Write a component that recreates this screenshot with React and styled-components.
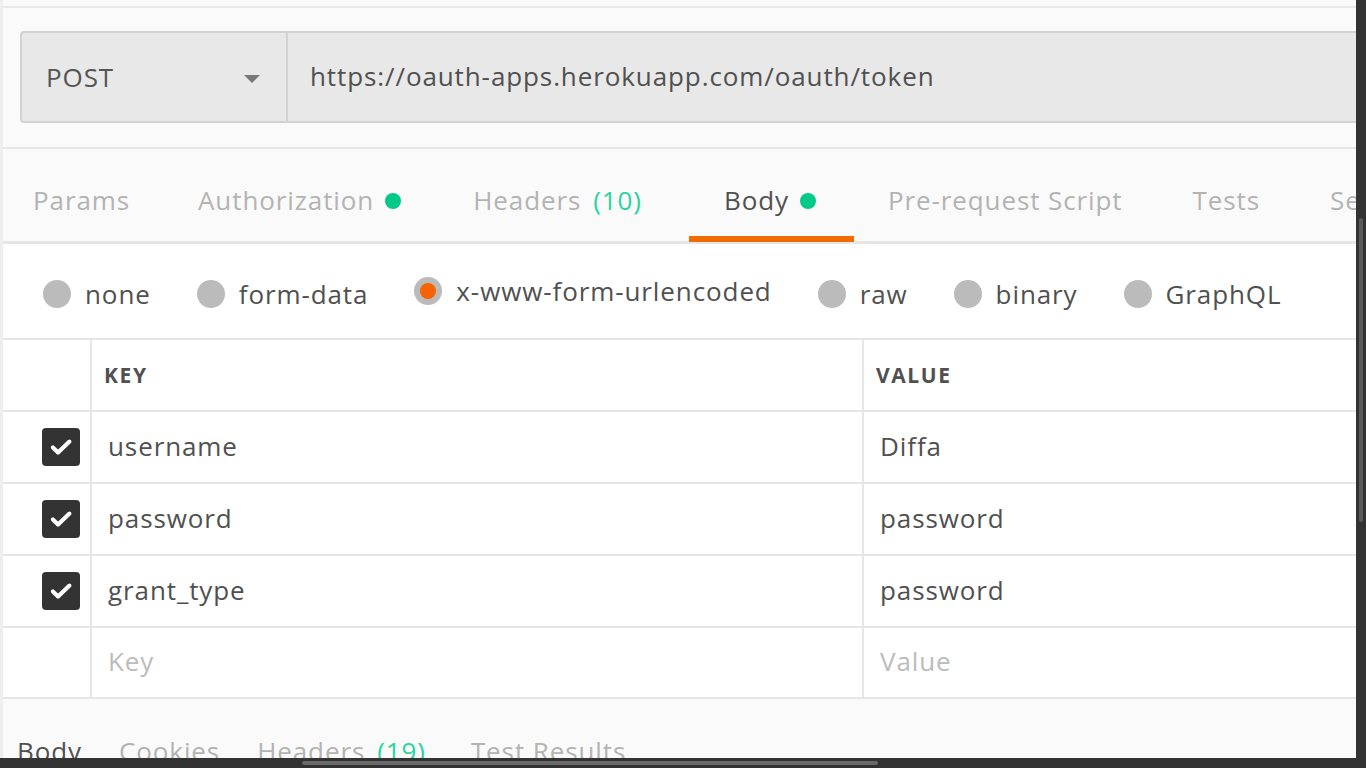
import React from 'react';
import styled, { createGlobalStyle } from 'styled-components';

const GlobalStyle = createGlobalStyle`
  html, body {
    margin: 0;
    padding: 0;
    background: #fafafa;
    overflow: hidden;
  }
  * { box-sizing: border-box; }
`;

const Frame = styled.div`
  width: 1366px;
  height: 768px;
  display: grid;
  grid-template-columns: 1356px 10px;
  grid-template-rows: 758px 10px;
  background: #333;
  font-family: "Open Sans", "Liberation Sans", sans-serif;
  letter-spacing: 0.9px;
  color: #505050;
`;

const Main = styled.div`
  display: flex;
  flex-direction: column;
  background: #fafafa;
  overflow: hidden;
  border-left: 3px solid #eeeeee;
`;

const TopStrip = styled.div`
  height: 8px;
  flex: none;
  border-bottom: 2px solid #e8e8e8;
  background: #f9f9f9;
`;

const RequestArea = styled.div`
  flex: none;
  padding: 23px 0 24px 17px;
  border-bottom: 2px solid #e6e6e6;
`;

const RequestBar = styled.div`
  display: flex;
  height: 92px;
  background: #e8e8e8;
  border: 2px solid #d2d2d2;
  border-right: none;
  border-radius: 4px 0 0 4px;
`;

const Method = styled.div`
  width: 266px;
  display: flex;
  align-items: center;
  justify-content: space-between;
  padding: 0 26px 0 24px;
  border-right: 2px solid #d2d2d2;
  font-size: 26px;
  font-weight: 500;
  color: #555;
`;

const Caret = styled.span`
  width: 0;
  height: 0;
  border-left: 8px solid transparent;
  border-right: 8px solid transparent;
  border-top: 8px solid #777;
  margin-top: 3px;
`;

const Url = styled.div`
  display: flex;
  align-items: center;
  padding-left: 22px;
  padding-bottom: 2px;
  font-size: 26px;
  color: #505050;
`;

const TabRow = styled.div`
  flex: none;
  height: 95px;
  display: flex;
  align-items: stretch;
  border-bottom: 3px solid #e6e6e6;
  white-space: nowrap;
  padding-left: 30px;
`;

const Tab = styled.div`
  position: relative;
  display: flex;
  align-items: center;
  padding: 10px ${p => p.$pr || 0}px 0 ${p => p.$pl || 0}px;
  margin-right: ${p => p.$gap}px;
  font-size: 26px;
  color: ${p => (p.$active ? '#505050' : '#b3b3b3')};
  ${p =>
    p.$active &&
    `&::after {
      content: '';
      position: absolute;
      left: 0;
      right: 0;
      bottom: -1px;
      height: 6px;
      background: #f26b00;
    }`}
`;

const Count = styled.span`
  color: #2ad4a0;
  margin-left: ${p => p.$ml ?? 12}px;
`;

const Dot = styled.span`
  width: 16px;
  height: 16px;
  border-radius: 50%;
  background: #00c98a;
  margin-left: 11px;
  margin-top: 2px;
`;

const RadioRow = styled.div`
  flex: none;
  height: 96px;
  background: #fff;
  display: flex;
  align-items: center;
  padding: 5px 0 0 40px;
  border-bottom: 2px solid #e6e6e6;
  white-space: nowrap;
`;

const RadioItem = styled.label`
  display: flex;
  align-items: center;
  margin-right: ${p => p.$gap}px;
  font-size: 26px;
  color: #505050;
  margin-top: ${p => (p.$checked ? -5 : 0)}px;
`;

const RadioCircle = styled.span`
  width: 28px;
  height: 28px;
  border-radius: 50%;
  background: #bbbbbb;
  margin-right: 14px;
  display: flex;
  align-items: center;
  justify-content: center;
  &::after {
    content: '';
    width: 16px;
    height: 16px;
    border-radius: 50%;
    background: ${p => (p.$checked ? '#f66300' : 'transparent')};
  }
`;

const Table = styled.div`
  flex: none;
  background: #fff;
  display: grid;
  grid-template-columns: 89px 772px 1fr;
`;

const Cell = styled.div`
  height: ${p => (p.$short ? 71 : 72)}px;
  display: flex;
  align-items: center;
  border-bottom: 2px solid #e6e6e6;
  border-right: ${p => (p.$last ? 'none' : '2px solid #e6e6e6')};
  padding-left: ${p => p.$pl || 0}px;
  justify-content: ${p => (p.$end ? 'flex-end' : 'flex-start')};
  padding-right: ${p => p.$pr || 0}px;
  padding-bottom: ${p => (p.$head ? 0 : 3)}px;
  font-size: ${p => (p.$head ? 21 : 26)}px;
  font-weight: ${p => (p.$head ? 700 : 400)};
  letter-spacing: ${p => (p.$head ? 1.6 : 0.9)}px;
  color: ${p => (p.$placeholder ? '#bcbcbc' : '#505050')};
  white-space: nowrap;
`;

const CheckBox = styled.span`
  width: 38px;
  height: 38px;
  border-radius: 4px;
  background: #333;
  display: flex;
  align-items: center;
  justify-content: center;
  margin-top: 3px;
`;

const BottomTabs = styled.div`
  flex: 1;
  display: flex;
  padding: 34px 0 0 14px;
  white-space: nowrap;
  overflow: hidden;
`;

const BottomTab = styled.div`
  font-size: 26px;
  margin-right: ${p => p.$gap}px;
  color: ${p => (p.$active ? '#505050' : '#b3b3b3')};
`;

const VScroll = styled.div`
  background: #333;
  position: relative;
  &::after {
    content: '';
    position: absolute;
    left: 3px;
    width: 4px;
    top: 218px;
    height: 304px;
    border-radius: 2px;
    background: #5a5a5a;
  }
`;

const HScroll = styled.div`
  grid-column: 1 / 3;
  background: #333;
  position: relative;
  &::after {
    content: '';
    position: absolute;
    top: 3px;
    height: 4px;
    left: 302px;
    width: 576px;
    border-radius: 2px;
    background: #6a6a6a;
  }
`;

const Check = () => (
  <CheckBox>
    <svg width="26" height="26" viewBox="0 0 24 24">
      <path d="M4.5 12.5l4.8 4.6L19.8 7" fill="none" stroke="#fff" strokeWidth="3.8" strokeLinecap="round" strokeLinejoin="round" />
    </svg>
  </CheckBox>
);

const tabs = [
  { label: 'Params', gap: 68 },
  { label: 'Authorization', dot: true, gap: 72 },
  { label: 'Headers', count: '(10)', gap: 47 },
  { label: 'Body', dot: true, active: true, gap: 34, pl: 35, pr: 38 },
  { label: 'Pre-request Script', gap: 70 },
  { label: 'Tests', gap: 70 },
  { label: 'Settings', gap: 0 },
];

const radios = [
  { label: 'none', gap: 46 },
  { label: 'form-data', gap: 46 },
  { label: 'x-www-form-urlencoded', checked: true, gap: 46 },
  { label: 'raw', gap: 46 },
  { label: 'binary', gap: 46 },
  { label: 'GraphQL', gap: 0 },
];

const rows = [
  ['username', 'Diffa'],
  ['password', 'password'],
  ['grant_type', 'password'],
];

export default function App() {
  return (
    <>
      <GlobalStyle />
      <Frame>
        <Main>
          <TopStrip />
          <RequestArea>
            <RequestBar>
              <Method>
                POST
                <Caret />
              </Method>
              <Url>https://oauth-apps.herokuapp.com/oauth/token</Url>
            </RequestBar>
          </RequestArea>

          <TabRow>
            {tabs.map(t => (
              <Tab key={t.label} $active={t.active} $gap={t.gap} $pl={t.pl} $pr={t.pr}>
                {t.label}
                {t.count && <Count>{t.count}</Count>}
                {t.dot && <Dot />}
              </Tab>
            ))}
          </TabRow>

          <RadioRow>
            {radios.map(r => (
              <RadioItem key={r.label} $gap={r.gap} $checked={r.checked}>
                <RadioCircle $checked={r.checked} />
                {r.label}
              </RadioItem>
            ))}
          </RadioRow>

          <Table>
            <Cell $head />
            <Cell $head $pl={12}>KEY</Cell>
            <Cell $head $pl={12} $last>VALUE</Cell>
            {rows.map(([k, v]) => (
              <React.Fragment key={k}>
                <Cell $end $pr={10}><Check /></Cell>
                <Cell $pl={16}>{k}</Cell>
                <Cell $pl={16} $last>{v}</Cell>
              </React.Fragment>
            ))}
            <Cell $short />
            <Cell $short $pl={16} $placeholder>Key</Cell>
            <Cell $short $pl={16} $placeholder $last>Value</Cell>
          </Table>

          <BottomTabs>
            <BottomTab $active $gap={37}>Body</BottomTab>
            <BottomTab $gap={37}>Cookies</BottomTab>
            <BottomTab $gap={45}>
              Headers<Count $ml={12}>(19)</Count>
            </BottomTab>
            <BottomTab $gap={0}>Test Results</BottomTab>
          </BottomTabs>
        </Main>
        <VScroll />
        <HScroll />
      </Frame>
    </>
  );
}
